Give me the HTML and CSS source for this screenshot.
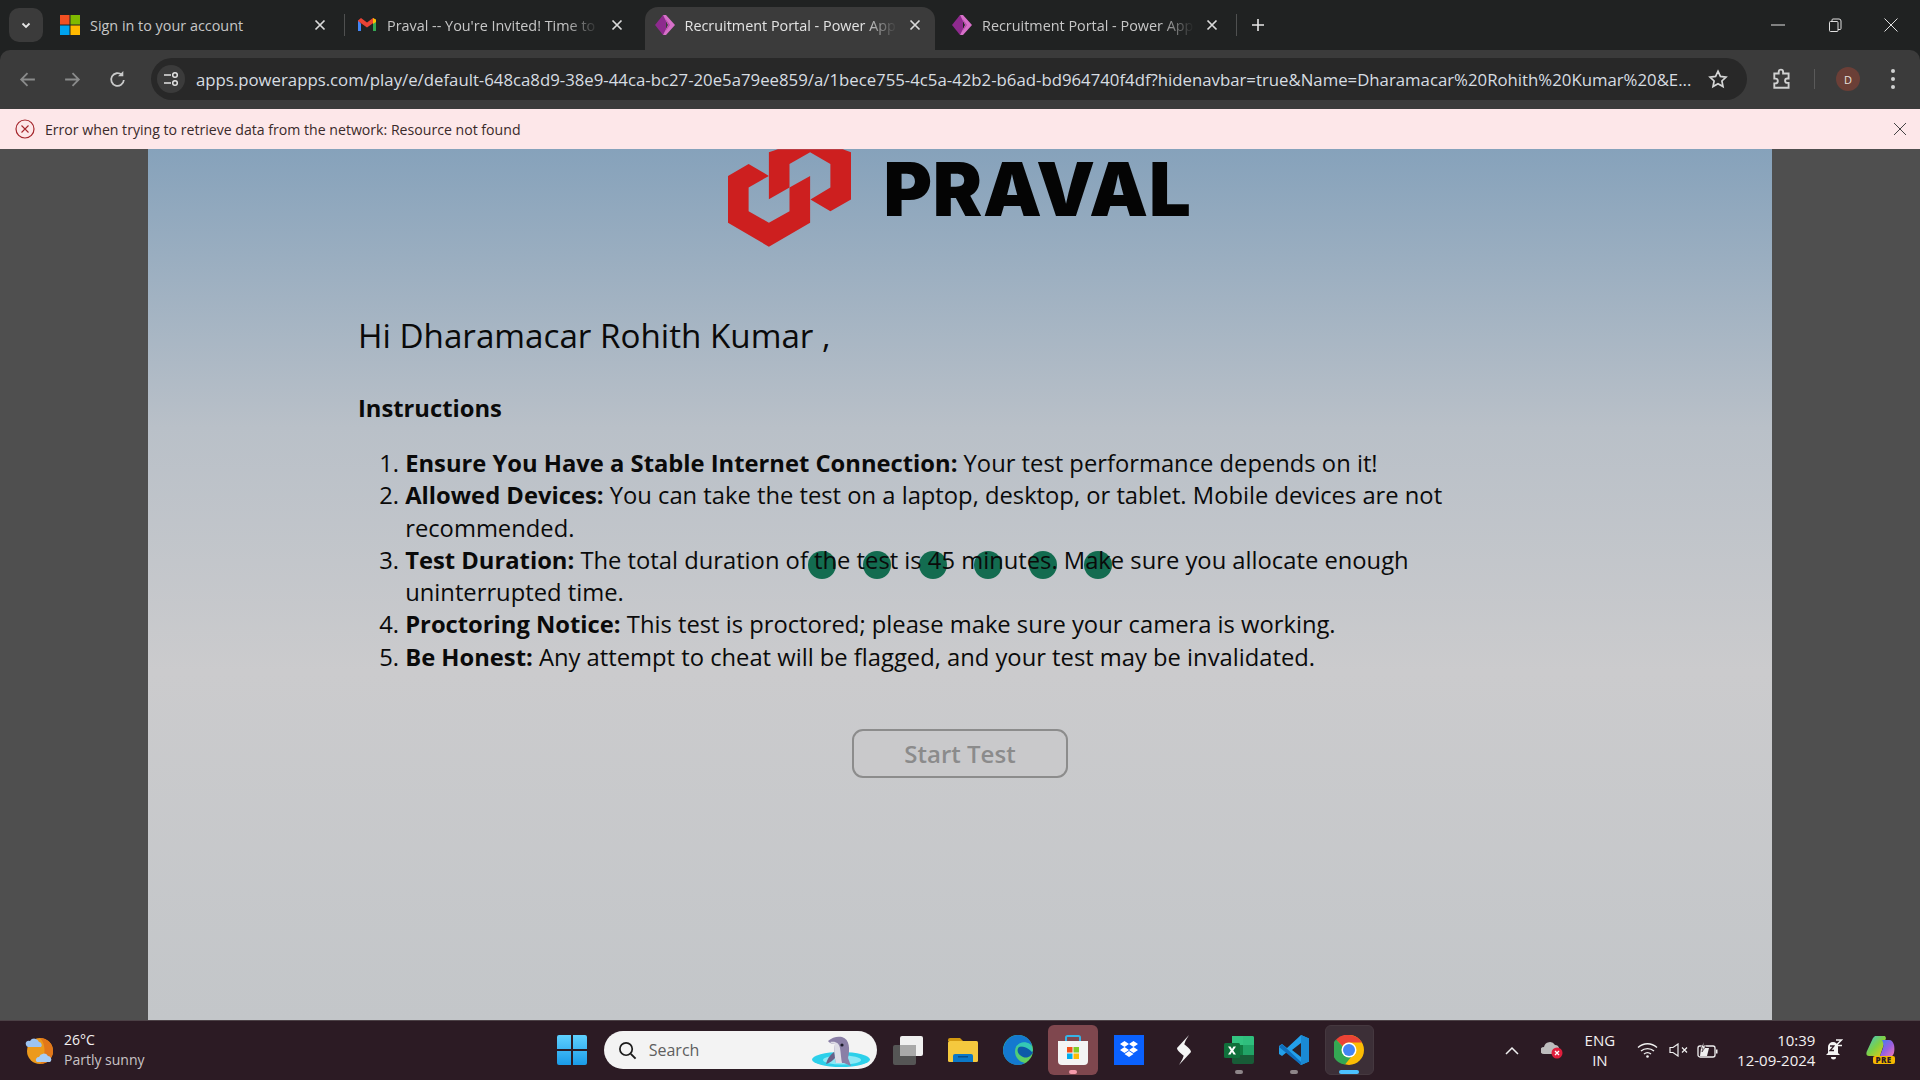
FILE: index.html
```html
<!DOCTYPE html>
<html lang="en">
<head>
<meta charset="utf-8">
<title>Recruitment Portal - Power Apps</title>
<link rel="stylesheet" href="styles.css">
</head>
<body>
<div class="screen">
  <header class="tabstrip">
    <div class="tab-search"><svg width="12" height="12" viewBox="0 0 12 12"><path d="M2.5 4.5 6 8l3.500-3.500" fill="none" stroke="#e6e6e6" stroke-width="1.800"/></svg></div>
    <div class="tab">
      <svg class="fav" viewBox="0 0 20 20"><rect width="9.500" height="9.500" fill="#f25022"/><rect x="10.500" width="9.500" height="9.500" fill="#7fba00"/><rect y="10.500" width="9.500" height="9.500" fill="#00a4ef"/><rect x="10.500" y="10.500" width="9.500" height="9.500" fill="#ffb900"/></svg>
      <span class="tab-title">Sign in to your account</span>
      <svg class="tab-x" viewBox="0 0 12 12"><path d="M1.500 1.500l9 9M10.500 1.500l-9 9"/></svg>
    </div>
    <div class="tab-sep"></div>
    <div class="tab">
      <svg class="fav" viewBox="0 0 20 20"><path d="M1 5v11h3V8.500z" fill="#4285f4"/><path d="M16 16h3V5l-3 3.500z" fill="#34a853"/><path d="M1 5.500 4 3l6 4.500L16 3l3 2.500V6l-9 6.500L1 6z" fill="#ea4335"/><path d="M16 3l3 1.500V7l-3 2z" fill="#fbbc04"/></svg>
      <span class="tab-title fade">Praval -- You're Invited! Time to</span>
      <svg class="tab-x" viewBox="0 0 12 12"><path d="M1.500 1.500l9 9M10.500 1.500l-9 9"/></svg>
    </div>
    <div class="tab tab-active">
      <svg class="fav" viewBox="0 0 20 20"><path d="M8 0 0 10l8 10 3-4V4z" fill="#8e2a8e"/><path d="M11 0H8l5 10-5 10h3l9-10z" fill="#d770c9"/><path d="M10 3l5 7-5 7 3.500-7z" fill="#b347a8"/></svg>
      <span class="tab-title fade">Recruitment Portal - Power App</span>
      <svg class="tab-x" viewBox="0 0 12 12"><path d="M1.500 1.500l9 9M10.500 1.500l-9 9"/></svg>
    </div>
    <div class="tab">
      <svg class="fav" viewBox="0 0 20 20"><path d="M8 0 0 10l8 10 3-4V4z" fill="#8e2a8e"/><path d="M11 0H8l5 10-5 10h3l9-10z" fill="#d770c9"/><path d="M10 3l5 7-5 7 3.500-7z" fill="#b347a8"/></svg>
      <span class="tab-title fade">Recruitment Portal - Power App</span>
      <svg class="tab-x" viewBox="0 0 12 12"><path d="M1.500 1.500l9 9M10.500 1.500l-9 9"/></svg>
    </div>
    <div class="tab-sep tab-sep-end"></div>
    <svg class="tab-new" viewBox="0 0 14 14"><path d="M7 1v12M1 7h12" stroke="#e6e6e6" stroke-width="1.600"/></svg>
    <div class="win-controls">
      <svg class="win-btn" viewBox="0 0 14 14"><path d="M0 7h14" stroke="#e0e0e0" stroke-width="1"/></svg>
      <svg class="win-btn" viewBox="0 0 14 14"><rect x="1.500" y="3.500" width="8.500" height="10" rx="1" fill="none" stroke="#e0e0e0"/><path d="M4 3.500V2a1 1 0 0 1 1-1h6a2 2 0 0 1 2 2v7.500a1 1 0 0 1-1 1h-2" fill="none" stroke="#e0e0e0"/></svg>
      <svg class="win-btn" viewBox="0 0 14 14"><path d="M.5.500l13 13M13.500.500l-13 13" stroke="#e0e0e0" stroke-width="1"/></svg>
    </div>
  </header>

  <nav class="toolbar">
    <svg class="nav-icon" viewBox="0 0 18 18"><path d="M16 9H3M9 3 3 9l6 6" fill="none" stroke="#8a8b8b" stroke-width="1.700"/></svg>
    <svg class="nav-icon" viewBox="0 0 18 18"><path d="M2 9h13M9 3l6 6-6 6" fill="none" stroke="#8a8b8b" stroke-width="1.700"/></svg>
    <svg class="nav-icon" viewBox="0 0 18 18"><path d="M15 9.500A6 6 0 1 1 13 4.500" fill="none" stroke="#c9caca" stroke-width="1.700"/><path d="M14.500 1v5h-5z" fill="#c9caca"/></svg>
    <div class="omnibox">
      <div class="site-btn"><svg width="18" height="18" viewBox="0 0 18 18"><path d="M2 5h7M2 13h7" stroke="#e2e2e2" stroke-width="1.600" fill="none"/><circle cx="13" cy="5" r="2.300" stroke="#e2e2e2" stroke-width="1.500" fill="none"/><circle cx="13" cy="13" r="2.300" stroke="#e2e2e2" stroke-width="1.500" fill="none"/></svg></div>
      <span class="url">apps.powerapps.com/play/e/default-648ca8d9-38e9-44ca-bc27-20e5a79ee859/a/1bece755-4c5a-42b2-b6ad-bd964740f4df?hidenavbar=true&amp;Name=Dharamacar%20Rohith%20Kumar%20&amp;E...</span>
      <svg class="star" viewBox="0 0 20 20"><path d="M10 2.200l2.400 5.200 5.600.7-4.100 3.900 1.100 5.600-5-2.800-5 2.800 1.100-5.600L2 8.100l5.600-.7z" fill="none" stroke="#d5d6d6" stroke-width="1.700"/></svg>
    </div>
    <svg class="ext" viewBox="0 0 20 20"><path d="M3 5h4V3.500a2 2 0 0 1 4 0V5h5v4.500h-1.200a2 2 0 0 0 0 4H16V18H3v-4h1a2.200 2.200 0 0 0 0-4.400H3z" fill="none" stroke="#d0d1d1" stroke-width="1.700"/></svg>
    <div class="tool-sep"></div>
    <div class="avatar">D</div>
    <div class="dots"><i></i><i></i><i></i></div>
  </nav>

  <div class="banner">
    <svg class="banner-icon" viewBox="0 0 20 20"><circle cx="10" cy="10" r="9" fill="none" stroke="#a4262c" stroke-width="1.200"/><path d="M6.500 6.500l7 7M13.500 6.500l-7 7" stroke="#a4262c" stroke-width="1.100"/></svg>
    <span class="banner-text">Error when trying to retrieve data from the network: Resource not found</span>
    <svg class="banner-x" viewBox="0 0 14 14"><path d="M1 1l12 12M13 1 1 13" stroke="#444" stroke-width="1"/></svg>
  </div>

  <main class="viewport">
    <div class="gutter"></div>
    <section class="app">
      <div class="brand">
        <svg class="brand-mark" viewBox="85 27 370 293"><path fill="#cd1f1f" d="M85 107 147 71l61 36-61 35v71l61 35 62-35v-71l62-35v141l-124 72-123-72z"/><path fill="#cd1f1f" d="M208 36 235 27H430l25 9v142l-62 35-60-35 60-36V71l-61-35-62 35v71l-62 35z"/></svg>
        <span class="brand-name">PRAVAL</span>
      </div>
      <div class="loader"><i></i><i></i><i></i><i></i><i></i><i></i></div>
      <div class="content">
        <h1 class="greeting">Hi Dharamacar Rohith Kumar ,</h1>
        <h2 class="instr-title">Instructions</h2>
        <ol class="instr-list">
          <li><b>Ensure You Have a Stable Internet Connection:</b> Your test performance depends on it!</li>
          <li><b>Allowed Devices:</b> You can take the test on a laptop, desktop, or tablet. Mobile devices are not recommended.</li>
          <li><b>Test Duration:</b> The total duration of the test is 45 minutes. Make sure you allocate enough uninterrupted time.</li>
          <li><b>Proctoring Notice:</b> This test is proctored; please make sure your camera is working.</li>
          <li><b>Be Honest:</b> Any attempt to cheat will be flagged, and your test may be invalidated.</li>
        </ol>
      </div>
      <button class="start">Start Test</button>
    </section>
    <div class="gutter"></div>
  </main>

  <footer class="taskbar">
    <div class="weather">
      <svg class="weather-icon" viewBox="0 0 32 32"><circle cx="17" cy="17" r="13" fill="#ec9a1c"/><path d="M17 4a13 13 0 0 1 0 26c5-5 7-19 0-26z" fill="#e2771a"/><path d="M3 11a3 3 0 0 1 4-4 5 5 0 0 1 9 1 3 3 0 0 1 2 5H5a3 3 0 0 1-2-2z" fill="#9cc4f2"/><path d="M13 27a3 3 0 0 1 3-4 5 5 0 0 1 9-1 3.500 3.500 0 0 1 3 5l-1 1H14z" fill="#a9cdf5"/></svg>
      <div class="weather-text"><div class="temp">26°C</div><div class="cond">Partly sunny</div></div>
    </div>
    <div class="task-btn task-win"><svg width="30" height="30" viewBox="0 0 30 30"><defs><linearGradient id="w" x1="0" y1="0" x2="0" y2="1"><stop offset="0" stop-color="#5fd1ff"/><stop offset="1" stop-color="#1a9be8"/></linearGradient></defs><path d="M0 2a2 2 0 0 1 2-2h12v14H0zM16 0h12a2 2 0 0 1 2 2v12H16zM0 16h14v14H2a2 2 0 0 1-2-2zM16 16h14v12a2 2 0 0 1-2 2H16z" fill="url(#w)"/></svg></div>
    <div class="search">
      <svg class="search-icon" viewBox="0 0 20 20"><circle cx="8.500" cy="8.500" r="6.500" fill="none" stroke="#1c1c1c" stroke-width="1.800"/><path d="M13.500 13.500l5 5" stroke="#1c1c1c" stroke-width="2"/></svg>
      <span class="search-text">Search</span>
      <svg class="dolphin" viewBox="0 0 60 40"><ellipse cx="29" cy="29.500" rx="29" ry="7.500" fill="#2cd0ea"/><ellipse cx="30" cy="30" rx="19" ry="4.500" fill="#8ce8f5"/><path d="M16 11C20 7 26 6 30 7 38 9 38 20 36 28l3 8-7-3h-8C22 26 22 20 23 14 20 14 17 13 16 11z" fill="#8a7fa6"/><path d="M18 12c6-1 9 1 10 6 1 6 1 11 2 15h-6C22 26 22 20 23 14c-2 0-4-1-5-2z" fill="#dedde6"/><path d="M22 22c-4 3-7 7-8 12 4-1 7-4 9-6z" fill="#6b6088"/><circle cx="30" cy="15" r="1.600" fill="#1b1b2a"/></svg>
    </div>
    <div class="task-btn"><svg width="30" height="30" viewBox="0 0 30 30"><rect x="0" y="10" width="23" height="20" rx="2" fill="#555"/><rect x="7" y="1" width="23" height="20" rx="2" fill="#f0f0f0"/><rect x="7" y="10" width="16" height="11" fill="#a9a9a9"/></svg></div>
    <div class="task-btn"><svg width="30" height="30" viewBox="0 0 30 30"><path d="M0 5a2 2 0 0 1 2-2h10l3 3H0z" fill="#d49a10"/><rect y="6" width="30" height="21" rx="1.500" fill="#f5c93e"/><path d="M5 27v-6a2 2 0 0 1 2-2h16a2 2 0 0 1 2 2v6z" fill="#0b78c8"/><rect x="10" y="21" width="10" height="1.500" fill="#0a4f88"/></svg></div>
    <div class="task-btn"><svg width="30" height="30" viewBox="0 0 30 30"><defs><linearGradient id="e1" x1="0" y1="0" x2="1" y2="1"><stop offset="0" stop-color="#2bc6b0"/><stop offset="1" stop-color="#6ed24c"/></linearGradient></defs><circle cx="15" cy="15" r="15" fill="url(#e1)"/><path d="M0 15C1 6 8 0 15 0c8 0 13 5 14 11-5-5-13-4-16 1-3 6 1 15 9 16-2 1-4 2-7 2C6 30 0 23 0 15z" fill="#1479cf"/><path d="M30 17c-1 3-5 7-10 5s-7-7-4-10c5-2 9 0 14 5z" fill="#0d5aa8"/><path d="M13 12c3-5 9-6 14-3 2 2 3 6 2 8-5-5-10-7-16-5z" fill="#34c8b5"/></svg></div>
    <div class="task-btn task-store"><svg width="30" height="30" viewBox="0 0 30 30"><path d="M8 6V2.500A1.500 1.500 0 0 1 9.500 1h11A1.500 1.500 0 0 1 22 2.500V6" fill="none" stroke="#36b3e6" stroke-width="2"/><path d="M0 6h30v20a4 4 0 0 1-4 4H4a4 4 0 0 1-4-4z" fill="#f4f4f4"/><rect x="9" y="12" width="5.500" height="5.500" fill="#f1511b"/><rect x="15.500" y="12" width="5.500" height="5.500" fill="#80cc28"/><rect x="9" y="18.500" width="5.500" height="5.500" fill="#00adef"/><rect x="15.500" y="18.500" width="5.500" height="5.500" fill="#fbbc09"/></svg><i class="run run-pink"></i></div>
    <div class="task-btn"><svg width="30" height="30" viewBox="0 0 30 30"><rect width="30" height="30" fill="#0a61fe"/><path d="M10.500 6l4.500 3-4.500 3L6 9zM19.500 6 24 9l-4.500 3L15 9zM10.500 12l4.500 3-4.500 3L6 15zM19.500 12l4.500 3-4.500 3-4.500-3zM15 16l4.500 3-4.500 3-4.500-3z" fill="#fff"/></svg></div>
    <div class="task-btn"><svg width="30" height="30" viewBox="0 0 30 30"><path d="M20 0 8 13c0 3 4 5 7 8l2-6c-3-2-3-6 3-15zM10 30l12-13c0-3-4-5-7-8l-2 6c3 2 3 6-3 15z" fill="#f5f5f5"/></svg></div>
    <div class="task-btn"><svg width="30" height="30" viewBox="0 0 30 30"><path d="M8 1h20a2 2 0 0 1 2 2v7H8z" fill="#33c481"/><path d="M19 1h9a2 2 0 0 1 2 2v7H19z" fill="#2fbf7d"/><rect x="8" y="10" width="22" height="10" fill="#107c41"/><rect x="19" y="10" width="11" height="10" fill="#21a366"/><path d="M8 20h22v7a2 2 0 0 1-2 2H10a2 2 0 0 1-2-2z" fill="#185c37"/><rect y="8" width="16" height="15" rx="1.500" fill="#10703b"/><path d="M4 11.500h2.500L8 14l1.500-2.500H12L9.300 15.500 12 19.500H9.500L8 17l-1.500 2.500H4l2.700-4z" fill="#fff"/></svg><i class="run"></i></div>
    <div class="task-btn"><svg width="30" height="30" viewBox="0 0 30 30"><path d="M22 0 30 3.500v23L22 30 8 17l-5 4-3-2v-8l3-2 5 4z" fill="#23a0ea"/><path d="M22 0v30l8-3.500v-23z" fill="#1a8ad4"/><path d="M22 8 13 15l9 7z" fill="#2c2127"/><path d="M3 9l19 18v3L0 12z" fill="#0f6fbd"/></svg><i class="run"></i></div>
    <div class="task-btn task-chrome"><svg width="30" height="30" viewBox="0 0 30 30"><circle cx="15" cy="15" r="15" fill="#fbbc04"/><path d="M15 0a15 15 0 0 1 13 7.500H15a7.500 7.500 0 0 0-6.500 3.750L2 4.500A15 15 0 0 1 15 0z" fill="#ea4335"/><path d="M2 4.500a15 15 0 0 0 9 25l6.500-8a7.500 7.500 0 0 1-9-10.250z" fill="#34a853"/><circle cx="15" cy="15" r="7.500" fill="#fff"/><circle cx="15" cy="15" r="6" fill="#4285f4"/></svg><i class="run run-blue"></i></div>
    <div class="tray">
      <div class="tray-item w-chev"><svg width="14" height="9" viewBox="0 0 14 9"><path d="M1 8l6-6 6 6" fill="none" stroke="#f0f0f0" stroke-width="1.500"/></svg></div>
      <div class="tray-item w-cloud"><svg width="22" height="18" viewBox="0 0 22 18"><path d="M3 13a3.500 3.500 0 0 1 0-7 6 6 0 0 1 11-2 4 4 0 0 1 4 3v6z" fill="#bdbdbd"/><circle cx="16" cy="12" r="5.500" fill="#e01e3c"/><path d="M14 10l4 4M18 10l-4 4" stroke="#fff" stroke-width="1.300"/></svg></div>
      <div class="tray-lang"><div>ENG</div><div>IN</div></div>
      <div class="tray-item w-wifi"><svg width="21" height="16" viewBox="0 0 21 16"><path d="M1 5.500c5.500-5 13.500-5 19 0M4 9c3.500-3.200 9.500-3.200 13 0M7 12c2-1.600 5-1.600 7 0" fill="none" stroke="#f0f0f0" stroke-width="1.400"/><circle cx="10.500" cy="14.500" r="1.300" fill="#f0f0f0"/></svg></div>
      <div class="tray-item w-vol"><svg width="20" height="14" viewBox="0 0 20 14"><path d="M1 4.500h3L9 1v12L4 9.500H1z" fill="none" stroke="#f0f0f0" stroke-width="1.200"/><path d="M13 4.500l5 5M18 4.500l-5 5" stroke="#f0f0f0" stroke-width="1.200"/></svg></div>
      <div class="tray-item w-bat"><svg width="21" height="17" viewBox="0 0 21 17"><rect x="1" y="4" width="17" height="11" rx="2" fill="none" stroke="#f0f0f0" stroke-width="1.300"/><rect x="19" y="7.500" width="1.500" height="4" fill="#f0f0f0"/><path d="M3 14l1-8h8l-2 8z" fill="#f0f0f0"/><path d="M7 0 3.500 6H6l-1 4 4-6H6.500z" fill="#f0f0f0" stroke="#2c1b24" stroke-width=".6"/></svg></div>
      <div class="clock"><div>10:39</div><div>12-09-2024</div></div>
      <div class="tray-item w-bell"><svg width="18" height="22" viewBox="0 0 18 22"><path d="M8 3a5 5 0 0 1 5 5v6l2 2H1l2-2V8a5 5 0 0 1 5-5z" fill="#f4f4f4"/><path d="M6 18h5a2.500 2.500 0 0 1-5 0z" fill="#f4f4f4"/><path d="M5 7h4L5 11.500h4" fill="none" stroke="#2c1b24" stroke-width="1.300"/><path d="M11 1h5.500L11 6.500h6" fill="none" stroke="#f4f4f4" stroke-width="1.500"/></svg></div>
      <div class="tray-item w-copilot">
        <svg width="30" height="30" viewBox="0 0 30 30"><defs><linearGradient id="c1" x1="0" y1="0" x2="1" y2="1"><stop offset="0" stop-color="#3bc4d9"/><stop offset=".5" stop-color="#7fd044"/><stop offset="1" stop-color="#f2c811"/></linearGradient><linearGradient id="c2" x1="0" y1="0" x2="1" y2="1"><stop offset="0" stop-color="#3a7ff0"/><stop offset=".55" stop-color="#9a5fe0"/><stop offset="1" stop-color="#f07ab8"/></linearGradient></defs><path d="M9 1h10l1 2-6 18H3c-3 0-3-3-2-5L7 3z" fill="url(#c1)"/><path d="M16 5h7c3 0 4 2 5 5 1 5 0 10-2 11H14l3-8c1-3 0-6-1-8z" fill="url(#c2)"/><rect x="7" y="21" width="22" height="8" rx="2" fill="#f5b800"/></svg>
        <span class="pre">PRE</span>
      </div>
    </div>
  </footer>
</div>
</body>
</html>
```

FILE: styles.css
```css
* { box-sizing: border-box; }
html, body { margin: 0; height: 100%; overflow: hidden; }
body { font-family: "Open Sans", "Noto Sans", sans-serif; background: #202222; }

.screen { display: flex; flex-direction: column; width: 1920px; height: 1080px; }

/* tab strip */
.tabstrip { display: flex; align-items: flex-end; height: 50px; flex: none; padding-left: 9px; background: #202222; position: relative; }
.tab-search { width: 34px; height: 34px; margin-bottom: 8px; margin-right: 7px; border-radius: 10px; background: #3b3b3b; display: flex; align-items: center; justify-content: center; }
.tab { width: 290px; height: 43px; flex: none; display: flex; align-items: center; padding: 0 14px 7px 10px; margin-right: 7.500px; color: #c7c7c7; font-size: 14.400px; border-radius: 13px 13px 0 0; }
.tab:nth-child(2) { margin-right: 3.500px; }
.tab-active { background: #3b3b3b; color: #e3e3e3; }
.fav { width: 20px; height: 20px; flex: none; }
.tab-title { flex: 1; min-width: 0; margin-left: 10px; white-space: nowrap; overflow: hidden; }
.fade { -webkit-mask-image: linear-gradient(to right, #000 84%, transparent 100%); mask-image: linear-gradient(to right, #000 84%, transparent 100%); }
.tab-x { width: 12px; height: 12px; flex: none; margin-left: 12px; stroke: #dadada; stroke-width: 1.700; fill: none; }
.tab-sep { width: 1px; height: 22px; margin-bottom: 14px; flex: none; margin-right: 2.500px; background: #4f5050; }
.tab-sep-end { margin-left: -4px; margin-right: 0; }
.tab-new { width: 14px; height: 14px; margin: 0 0 18px 14px; flex: none; }
.win-controls { margin-left: auto; display: flex; height: 50px; align-items: center; padding-right: 22px; gap: 42.500px; }
.win-btn { width: 14px; height: 14px; }

/* toolbar */
.toolbar { display: flex; align-items: center; height: 59px; flex: none; background: #3b3b3b; border-radius: 10px 10px 0 0; padding: 0 0 1px 18px; }
.nav-icon { width: 19px; height: 19px; flex: none; margin-right: 26px; }
.nav-icon:nth-child(3) { margin-right: 25px; }
.omnibox { width: 1596px; height: 42px; display: flex; align-items: center; background: #282828; border-radius: 21px; padding: 0 19px 0 7px; margin-left: -1px; flex: none; }
.site-btn { width: 28px; height: 28px; border-radius: 50%; background: #3b3b3b; display: flex; align-items: center; justify-content: center; flex: none; margin-left: -1px; }
.url { flex: 1; min-width: 0; margin-left: 11px; font-size: 16.770px; color: #d7dde2; white-space: nowrap; overflow: hidden; }
.star { width: 20px; height: 20px; margin-left: 6px; flex: none; }
.ext { width: 22px; height: 22px; margin-left: 24px; flex: none; }
.tool-sep { width: 1px; height: 20px; margin-left: 21px; background: #5a5a5a; flex: none; }
.avatar { width: 24px; height: 24px; margin-left: 21px; border-radius: 50%; background: #6b3f37; color: #e8e0de; font-size: 11px; display: flex; align-items: center; justify-content: center; flex: none; }
.dots { margin-left: 31px; display: flex; flex-direction: column; gap: 4px; flex: none; }
.dots i { display: block; width: 4px; height: 4px; border-radius: 50%; background: #d0d1d1; }

/* banner */
.banner { display: flex; align-items: center; height: 40px; flex: none; background: #fde7e9; padding: 0 13px 0 15px; }
.banner-icon { width: 20px; height: 20px; flex: none; }
.banner-text { margin-left: 10px; font-size: 14.120px; color: #3a2a2a; }
.banner-x { width: 14px; height: 14px; margin-left: auto; }

/* page */
.viewport { flex: 1; min-height: 0; display: flex; background: #4f4f4f; }
.gutter { width: 148px; flex: none; background: #4f4f4f; }
.app { flex: 1; min-width: 0; position: relative; display: flex; flex-direction: column; align-items: center; background: linear-gradient(to bottom, #86a2bb 0%, #b9c0c8 32%, #cbcbcd 60%, #c3c6c9 100%); }
.brand { display: flex; align-items: flex-start; gap: 32px; height: 98px; }
.brand-mark { width: 123px; height: 98px; flex: none; }
.brand-name { font-family: Inter, Roboto, sans-serif; font-weight: 900; font-size: 74px; line-height: 64px; padding-top: 8px; letter-spacing: .8px; color: #040404; }
.loader { position: absolute; left: 660px; top: 402px; display: flex; gap: 27.300px; }
.loader i { display: block; width: 28px; height: 28px; border-radius: 50%; background: #136c50; }
.content { position: relative; width: 100%; padding: 66px 0 0 210px; color: #0a0a0a; }
.greeting { margin: 0; font-weight: 400; font-size: 33.200px; line-height: 46px; }
.instr-title { margin: 32.500px 0 0; font-weight: 700; font-size: 23.760px; line-height: 33px; }
.instr-list { margin: 22.500px 0 0; padding: 0 300px 0 47.200px; font-size: 23.760px; line-height: 32.300px; }
.instr-list b { font-weight: 700; }
.start { width: 216px; height: 49px; margin-top: 55.500px; position: relative; border: 2px solid #8c8c8c; border-radius: 11px; background: #c9c9cb; color: #8b8b8b; font-family: inherit; font-weight: 600; font-size: 24px; padding: 0; }

/* taskbar */
.taskbar { display: flex; align-items: center; height: 60px; flex: none; background: #2c1b24; border-top: 1px solid #4c4146; padding-bottom: 1px; }
.weather { width: 544.500px; flex: none; display: flex; align-items: center; padding-left: 23px; }
.weather-icon { width: 32px; height: 32px; flex: none; }
.weather-text { margin: -1px 0 0 9px; font-size: 14px; line-height: 20px; color: #f3f0f1; }
.cond { color: #c9c3c6; }
.task-btn { position: relative; width: 55.200px; height: 50px; flex: none; display: flex; align-items: center; justify-content: center; }
.task-win { margin-right: 4px; }
.task-store::before { content: ""; position: absolute; left: 2.500px; right: 2.500px; top: 0; bottom: 0; border-radius: 6px; background: #7f474e; }
.task-chrome::before { content: ""; position: absolute; left: 3px; right: 3px; top: 0; bottom: 0; border-radius: 6px; background: #3c2f37; border: 1px solid #45383f; }
.task-btn svg { position: relative; }
.run { position: absolute; left: 50%; bottom: 1px; width: 8px; height: 4px; margin-left: -4px; border-radius: 2px; background: #8e8689; }
.run-pink { background: #f59aab; }
.run-blue { width: 20px; margin-left: -10px; background: #4cc2ff; }
.search { width: 273px; height: 38px; flex: none; display: flex; align-items: center; margin-right: 3.500px; padding-left: 14px; border-radius: 19px; background: #f3f3f3; position: relative; }
.search-icon { width: 19px; height: 19px; flex: none; }
.search-text { margin-left: 12px; font-size: 16px; color: #5e5e5e; }
.dolphin { position: absolute; right: 5px; top: -1px; width: 60px; height: 40px; }
.tray { margin-left: 116px; flex: 1; min-width: 0; display: flex; align-items: center; color: #f3f0f1; font-size: 15px; line-height: 20px; }
.tray-item { display: flex; align-items: center; justify-content: center; flex: none; position: relative; }
.w-chev { width: 38px; margin-left: 0; }
.w-cloud { width: 42px; }
.tray-lang { width: 52px; flex: none; text-align: center; margin-left: 1px; }
.w-wifi { width: 30px; margin-left: 7px; }
.w-vol { width: 30px; margin-left: 1px; }
.w-bat { width: 31px; margin-left: -1.500px; }
.clock { width: 92px; flex: none; text-align: right; }
.w-bell { width: 40px; margin-left: -1px; }
.w-copilot { width: 44px; margin-left: 5px; }
.pre { position: absolute; left: 16px; bottom: 1px; font-size: 8px; line-height: 9px; font-weight: 800; color: #2c1b24; letter-spacing: .5px; }
```
